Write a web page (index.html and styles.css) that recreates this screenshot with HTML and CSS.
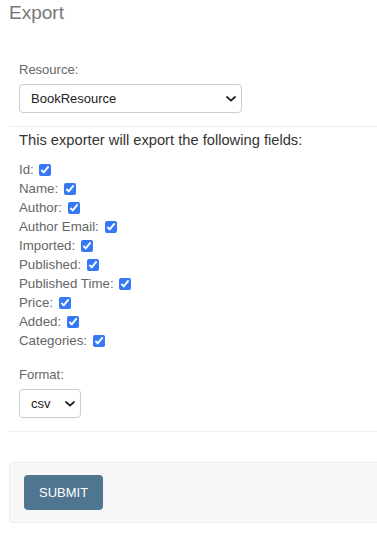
FILE: index.html
```html
<!DOCTYPE html>
<html lang="en">
<head>
    <meta charset="UTF-8">
    <meta name="viewport" content="width=device-width, initial-scale=1.0">
    <title>Export</title>
    <link rel="stylesheet" href="styles.css">
</head>
<body>
<div class="content">
    <h1>Export</h1>

    <form class="export-form" onsubmit="return false;">
        <div class="module">
            <label class="field-label" for="resource">Resource:</label>
            <select id="resource" class="resource-select">
                <option>BookResource</option>
            </select>
        </div>

        <div class="module">
            <p class="help">This exporter will export the following fields:</p>

            <ul class="field-list">
                <li><label>Id: <input type="checkbox" checked></label></li>
                <li><label>Name: <input type="checkbox" checked></label></li>
                <li><label>Author: <input type="checkbox" checked></label></li>
                <li><label>Author Email: <input type="checkbox" checked></label></li>
                <li><label>Imported: <input type="checkbox" checked></label></li>
                <li><label>Published: <input type="checkbox" checked></label></li>
                <li><label>Published Time: <input type="checkbox" checked></label></li>
                <li><label>Price: <input type="checkbox" checked></label></li>
                <li><label>Added: <input type="checkbox" checked></label></li>
                <li><label>Categories: <input type="checkbox" checked></label></li>
            </ul>

            <label class="field-label" for="format">Format:</label>
            <select id="format" class="format-select">
                <option>csv</option>
                <option>xls</option>
                <option>xlsx</option>
                <option>tsv</option>
                <option>json</option>
                <option>yaml</option>
                <option>html</option>
            </select>
        </div>

        <div class="submit-row">
            <button type="submit" class="submit">Submit</button>
        </div>
    </form>
</div>
</body>
</html>
```

FILE: styles.css
```css
body {
    margin: 0;
    font-family: "Liberation Sans", Arial, sans-serif;
    font-size: 13px;
    color: #333;
    background: #fff;
}

.content {
    padding-left: 9px;
}

h1 {
    margin: 0;
    font-size: 19px;
    line-height: 26px;
    font-weight: normal;
    color: #777;
}

.module {
    padding: 5px 10px 13px;
    border-bottom: 1px solid #eee;
}

.module:first-child {
    padding-top: 36px;
}

.field-label {
    display: block;
    line-height: 16px;
    margin-bottom: 6px;
    color: #666;
}

select {
    appearance: none;
    -webkit-appearance: none;
    height: 29px;
    padding: 0 20px 0 11px;
    border: 1px solid #ccc;
    border-radius: 4px;
    background: #fff url("data:image/svg+xml,%3Csvg xmlns='http://www.w3.org/2000/svg' width='10' height='6' viewBox='0 0 10 6'%3E%3Cpath d='M1 1l4 3.6L9 1' fill='none' stroke='%23222' stroke-width='1.8' stroke-linecap='round' stroke-linejoin='round'/%3E%3C/svg%3E") no-repeat right 5px center;
    font-family: inherit;
    font-size: 13px;
    color: #222;
}

.resource-select {
    width: 223px;
}

.format-select {
    width: 62px;
}

.help {
    margin: 0 0 11px;
    font-size: 14.7px;
    line-height: 17px;
    color: #333;
}

.field-list {
    list-style: none;
    margin: 0 0 17px;
    padding: 0;
}

.field-list li {
    line-height: 19px;
    height: 19px;
    font-size: 13.3px;
    color: #666;
}

.field-list input {
    width: 12px;
    height: 12px;
    margin: 0 0 0 2px;
    vertical-align: -2px;
    accent-color: #3478f6;
}

.submit-row {
    margin-top: 30px;
    padding: 12px 14px;
    background: #f8f8f8;
    border: 1px solid #eee;
    border-right: none;
    border-radius: 4px 0 0 4px;
}

.submit {
    height: 35px;
    padding: 0 15px;
    border: none;
    border-radius: 4px;
    background: #4f7590;
    color: #fff;
    font-family: inherit;
    font-size: 13px;
    text-transform: uppercase;
    cursor: pointer;
}
```
